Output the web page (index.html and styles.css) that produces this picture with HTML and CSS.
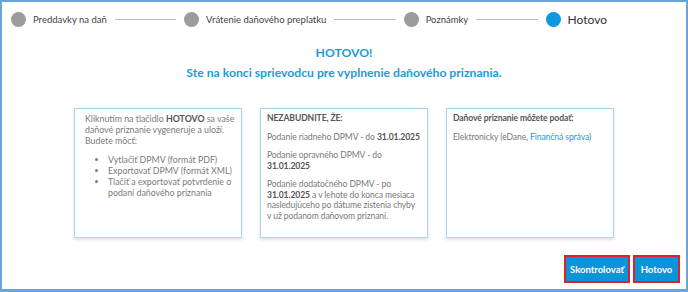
FILE: index.html
```html
<!DOCTYPE html>
<html lang="sk">
<head>
    <meta charset="UTF-8">
    <meta name="viewport" content="width=device-width, initial-scale=1.0">
    <title>Hotovo</title>
    <link rel="stylesheet" href="styles.css">
</head>
<body>
    <div class="frame">
        <div class="stepper">
            <span class="dot"></span>
            <span class="step-label">Preddavky na daň</span>
            <span class="step-line"></span>
            <span class="dot"></span>
            <span class="step-label">Vrátenie daňového preplatku</span>
            <span class="step-line"></span>
            <span class="dot"></span>
            <span class="step-label">Poznámky</span>
            <span class="step-line"></span>
            <span class="dot active"></span>
            <span class="step-label current">Hotovo</span>
        </div>

        <div class="heading">
            <div>HOTOVO!</div>
            <div>Ste na konci sprievodcu pre vyplnenie daňového priznania.</div>
        </div>

        <div class="boxes">
            <div class="box intro">
                <p>Kliknutím na tlačidlo <b>HOTOVO</b> sa vaše daňové priznanie vygeneruje a uloží. Budete môcť:</p>
                <ul>
                    <li>Vytlačiť DPMV (formát PDF)</li>
                    <li>Exportovať DPMV (formát XML)</li>
                    <li>Tlačiť a exportovať potvrdenie o podaní daňového priznania</li>
                </ul>
            </div>
            <div class="box">
                <p><b>NEZABUDNITE, ŽE:</b></p>
                <p>Podanie riadneho DPMV - do <b class="date">31.01.2025</b></p>
                <p>Podanie opravného DPMV - do<br><b>31.01.2025</b></p>
                <p>Podanie dodatočného DPMV - po<br><b>31.01.2025</b> a v lehote do konca mesiaca<br>nasledujúceho po dátume zistenia chyby<br>v už podanom daňovom priznaní.</p>
            </div>
            <div class="box">
                <p><b>Daňové priznanie môžete podať:</b></p>
                <p>Elektronicky (eDane, <a href="#">Finančná správa</a>)</p>
            </div>
        </div>

        <div class="actions">
            <button class="btn check">Skontrolovať</button>
            <button class="btn done">Hotovo</button>
        </div>
    </div>
</body>
</html>
```

FILE: styles.css
```css
/* Posledný krok sprievodcu */
body {
    margin: 0;
    font-family: Lato, "Open Sans", sans-serif;
    background-color: #fff;
}

.frame {
    width: 688px;
    height: 292px;
    box-sizing: border-box;
    border: 2px solid #6aa6dc;
    border-bottom-width: 3px;
    display: flex;
    flex-direction: column;
}

.stepper {
    display: flex;
    align-items: center;
    height: 28px;
    padding: 3px 79px 0 9px;
}

.dot {
    width: 15px;
    height: 15px;
    border-radius: 50%;
    background-color: #9c9c9c;
    flex-shrink: 0;
}

.dot.active {
    background-color: #0b98dd;
}

.step-label {
    margin-left: 7px;
    font-size: 9.5px;
    color: #444;
    white-space: nowrap;
}

.step-label.current {
    font-size: 12px;
    color: #333;
}

.step-line {
    flex: 1;
    height: 1px;
    margin: 0 8px;
    background-color: #bbb;
}

.heading {
    margin-top: 10px;
    text-align: center;
    color: #1b9bd8;
    font-weight: bold;
    font-size: 12.2px;
    line-height: 20px;
}

.boxes {
    display: flex;
    justify-content: center;
    gap: 18px;
    margin-top: 25px;
}

.box {
    width: 168px;
    height: 130px;
    box-sizing: border-box;
    padding: 4px 2px 4px 6px;
    border: 1px solid #a9d8ea;
    box-shadow: 0 2px 3px rgba(0, 0, 0, 0.12);
    font-size: 8.6px;
    line-height: 10.5px;
    letter-spacing: -0.1px;
    color: #7a7a7a;
}

.box p {
    margin: 0 0 8px;
}

.box b {
    color: #555;
}

.box .date {
    white-space: nowrap;
}

.box.intro {
    padding-left: 10px;
    padding-right: 6px;
    font-size: 8.8px;
    line-height: 11px;
    letter-spacing: 0;
}

.box ul {
    margin: 7px 0 0;
    padding-left: 23px;
}

.box a {
    color: #1b9bd8;
    text-decoration: none;
}

.actions {
    display: flex;
    justify-content: flex-end;
    gap: 3px;
    margin-top: auto;
    padding: 0 6px 6px 0;
}

.btn {
    height: 28px;
    padding: 0;
    border: 2px solid #e0202c;
    background-color: #0a95d8;
    color: #fff;
    font-family: inherit;
    font-weight: bold;
    font-size: 9.5px;
    cursor: pointer;
}

.btn.check {
    width: 66px;
}

.btn.done {
    width: 47px;
}

.btn:hover {
    background-color: #0b7fb8;
}
```
